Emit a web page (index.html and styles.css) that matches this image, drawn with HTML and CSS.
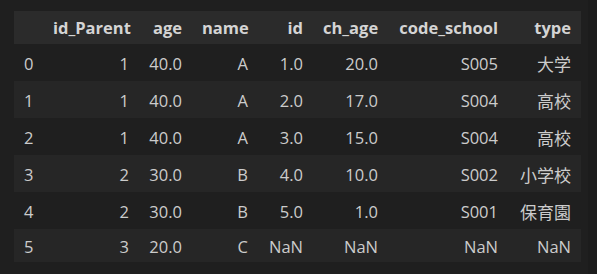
FILE: index.html
```html
<!DOCTYPE html>
<html lang="ja">
<head>
<meta charset="utf-8">
<link rel="stylesheet" href="styles.css">
</head>
<body>
<div class="page">
  <div class="output">
    <table class="df">
      <colgroup>
        <col class="c-idx"><col class="c-parent"><col class="c-age"><col class="c-name">
        <col class="c-id"><col class="c-chage"><col class="c-code"><col class="c-type">
      </colgroup>
      <thead>
        <tr class="head">
          <th></th><th>id_Parent</th><th>age</th><th>name</th><th>id</th><th>ch_age</th><th>code_school</th><th>type</th>
        </tr>
      </thead>
      <tbody>
        <tr class="row"><td class="idx">0</td><td>1</td><td>40.0</td><td>A</td><td>1.0</td><td>20.0</td><td>S005</td><td class="cjk">大学</td></tr>
        <tr class="row stripe"><td class="idx">1</td><td>1</td><td>40.0</td><td>A</td><td>2.0</td><td>17.0</td><td>S004</td><td class="cjk">高校</td></tr>
        <tr class="row"><td class="idx">2</td><td>1</td><td>40.0</td><td>A</td><td>3.0</td><td>15.0</td><td>S004</td><td class="cjk">高校</td></tr>
        <tr class="row stripe"><td class="idx">3</td><td>2</td><td>30.0</td><td>B</td><td>4.0</td><td>10.0</td><td>S002</td><td class="cjk">小学校</td></tr>
        <tr class="row"><td class="idx">4</td><td>2</td><td>30.0</td><td>B</td><td>5.0</td><td>1.0</td><td>S001</td><td class="cjk">保育園</td></tr>
        <tr class="row stripe last"><td class="idx">5</td><td>3</td><td>20.0</td><td>C</td><td>NaN</td><td>NaN</td><td>NaN</td><td>NaN</td></tr>
      </tbody>
    </table>
  </div>
  <div class="gutter"></div>
</div>
</body>
</html>
```

FILE: styles.css
```css
html, body {
  margin: 0;
  padding: 0;
  background: #1f1f1f;
}
.page {
  display: flex;
  width: 597px;
  height: 274px;
}
.output {
  flex: 1;
  padding: 11px 0 0 14px;
}
.gutter {
  width: 9px;
  background: #1c1c1c;
}
.df {
  border-collapse: collapse;
  table-layout: fixed;
  width: 567px;
  font-family: "Open Sans", "Noto Sans CJK JP", sans-serif;
  font-size: 16.5px;
  color: #cccccc;
}
.c-idx { width: 29px; }
.c-parent { width: 96px; }
.c-age { width: 53px; }
.c-name { width: 66px; }
.c-id { width: 55px; }
.c-chage { width: 75px; }
.c-code { width: 120px; }
.c-type { width: 73px; }
.df th, .df td {
  padding: 0 10px;
  text-align: right;
  white-space: nowrap;
  vertical-align: middle;
}
.df .idx { text-align: left; }
.head {
  height: 33px;
  background: #2b2b2b;
}
.head th {
  font-weight: 700;
  color: #d4d4d4;
}
.row { height: 37px; }
.row td { padding-top: 2px; }
.row.last { height: 33px; }
.row.last td { padding-top: 1px; }
.stripe { background: #262626; }
.cjk {
  font-family: "Noto Sans CJK JP", sans-serif;
  font-size: 17px;
}
```
